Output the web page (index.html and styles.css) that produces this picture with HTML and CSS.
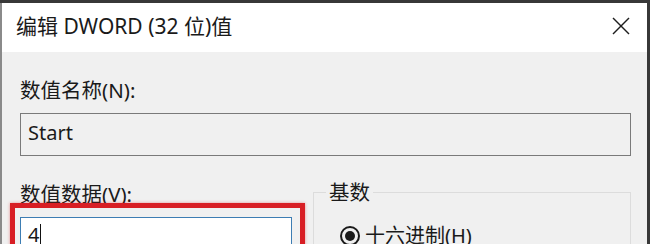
FILE: index.html
```
<!DOCTYPE html>
<html lang="zh-CN">
<head>
  <meta charset="UTF-8">
  <meta name="viewport" content="width=device-width, initial-scale=1.0">
  <title>编辑 DWORD (32 位)值</title>
  <link rel="stylesheet" href="styles.css">
</head>
<body>
  <div class="dialog">
    <div class="titlebar">
      <span class="title">编辑 DWORD (32 位)值</span>
      <svg class="close" xmlns="http://www.w3.org/2000/svg" width="18" height="18" viewBox="0 0 18 18" fill="none" stroke="#1e1e1e" stroke-width="1.4">
        <line x1="1" y1="1" x2="17" y2="17"></line>
        <line x1="17" y1="1" x2="1" y2="17"></line>
      </svg>
    </div>

    <div class="content">
      <p class="label">数值名称(N):</p>
      <div class="textbox readonly">Start</div>

      <div class="data-row">
        <div class="data-col">
          <p class="label data-label">数值数据(V):</p>
          <div class="value-wrap">
            <div class="textbox value">4<span class="caret"></span></div>
            <div class="highlight"></div>
          </div>
        </div>

        <fieldset class="base">
          <legend>基数</legend>
          <label class="radio">
            <span class="dot"></span>
            十六进制(H)
          </label>
        </fieldset>
      </div>
    </div>
  </div>
</body>
</html>
```

FILE: styles.css
```
* {
  box-sizing: border-box;
  margin: 0;
  padding: 0;
}
body {
  font-family: 'Noto Sans', 'Noto Sans CJK SC', sans-serif;
  color: #1a1a1a;
  background-color: #383838;
  height: 244px;
  overflow: hidden;
}
.dialog {
  margin: 3px 3px 0 0;
  border-left: 2px solid #8a8a8a;
  background-color: #f0f0f0;
  height: 241px;
  overflow: hidden;
}
.titlebar {
  height: 49px;
  background: white;
  display: flex;
  align-items: center;
  justify-content: space-between;
  padding: 0 17px 0 14px;
}
.title {
  font-size: 21px;
  line-height: 28px;
  margin-top: -3px;
}
.close {
  margin-top: -3px;
}
.content {
  padding: 26px 16px 0 18px;
}
.label {
  font-size: 20.5px;
  line-height: 24px;
}
.textbox {
  height: 43px;
  margin-top: 11px;
  border: 1px solid #7a7a7a;
  font-size: 20px;
  line-height: 38px;
  padding: 0 7px;
}
.readonly {
  background-color: #f0f0f0;
}
.data-row {
  display: flex;
  gap: 21px;
  margin-top: 24px;
}
.data-col {
  width: 272px;
}
.data-label {
  padding-top: 2px;
}
.value-wrap {
  position: relative;
  margin-top: 11px;
}
.value {
  margin-top: 0;
  background: white;
  border-color: #3d7db3;
  line-height: 34px;
}
.caret {
  display: inline-block;
  width: 1px;
  height: 22px;
  background: #111;
  vertical-align: -4px;
  margin-left: 1px;
}
.highlight {
  position: absolute;
  top: -14px;
  left: -10px;
  right: -13px;
  height: 70px;
  border: 5px solid #d81e24;
  box-shadow: 0 0 3px rgba(216, 30, 36, 0.45);
}
.base {
  flex: 1;
  height: 100px;
  border: 1px solid #dcdcdc;
  padding: 0 12px;
}
.base legend {
  font-size: 20.5px;
  line-height: 24px;
  padding: 0 3px;
}
.radio {
  display: flex;
  align-items: center;
  gap: 5px;
  margin-top: 20px;
  margin-left: 14px;
  font-size: 20px;
  line-height: 24px;
}
.dot {
  width: 20px;
  height: 20px;
  border: 2px solid #1a1a1a;
  border-radius: 50%;
  display: flex;
  align-items: center;
  justify-content: center;
}
.dot::after {
  content: '';
  width: 10px;
  height: 10px;
  border-radius: 50%;
  background: #1a1a1a;
}
```
